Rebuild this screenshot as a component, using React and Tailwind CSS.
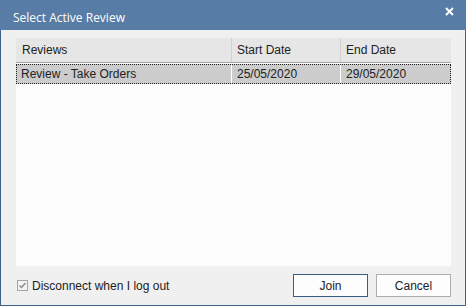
export default function App() {
    const cols = [
        { label: "Reviews", w: "w-[216px]", pl: "pl-[6px]" },
        { label: "Start Date", w: "w-[109px]", pl: "pl-[5px]" },
        { label: "End Date", w: "flex-1", pl: "pl-[5px]" },
    ]
    const row = ["Review - Take Orders", "25/05/2020", "29/05/2020"]

    return (
        <div className="w-[466px] h-[306px] flex flex-col bg-[#f0f0f0] border-x border-b border-[#3f6189] font-['Liberation_Sans',Arial,sans-serif] text-[12px] text-[#222]">
            {/* Title bar */}
            <div className="h-[30px] -mx-px bg-[#577ca5] flex items-center justify-between pl-[13px] pr-[12px] shrink-0">
                <span className="text-white text-[12px] font-['Open_Sans',sans-serif] pt-[5px]">Select Active Review</span>
                <svg width="9" height="9" viewBox="0 0 9 9" className="mb-[8px]">
                    <path d="M1 1 L8 8 M8 1 L1 8" stroke="white" strokeWidth="2" />
                </svg>
            </div>

            {/* Body */}
            <div className="flex-1 flex flex-col pl-[15px] pr-[14px] pt-[8px] pb-[8px]">
                <div className="h-[228px] bg-[#fdfdfd] flex flex-col">
                    {/* Header */}
                    <div className="h-[25px] flex bg-[#e6e6e6] border-b border-[#a5a5a5]">
                        {cols.map((c, i) => (
                            <div key={c.label} className={`${c.w} ${c.pl} flex items-center ${i < 2 ? "border-r border-[#d2d2d2]" : ""}`}>
                                {c.label}
                            </div>
                        ))}
                    </div>
                    {/* Selected row */}
                    <div className="mt-px h-[20px] flex bg-[#cccccc] border border-dotted border-[#222]">
                        {row.map((v, i) => (
                            <div key={i} className={`${i === 0 ? "w-[215px] pl-[4px]" : i === 1 ? "w-[109px] pl-[5px]" : "flex-1 pl-[5px]"} flex items-center ${i < 2 ? "border-r border-white" : ""}`}>
                                {v}
                            </div>
                        ))}
                    </div>
                </div>

                {/* Footer */}
                <div className="mt-[8px] flex items-center justify-between">
                    <label className="flex items-center gap-[4px] ml-px">
                        <span className="w-[11px] h-[11px] border border-[#a3a3a3] bg-[#f4f4f4] flex items-center justify-center">
                            <svg width="9" height="9" viewBox="0 0 9 9">
                                <path d="M1.5 4.5 L3.5 6.5 L7.5 2" stroke="#8a8a8a" strokeWidth="1.4" fill="none" />
                            </svg>
                        </span>
                        <span>Disconnect when I log out</span>
                    </label>
                    <div className="flex gap-[8px]">
                        <button className="w-[75px] h-[23px] bg-[#fdfdfd] border border-[#3c5d82] flex items-center justify-center">Join</button>
                        <button className="w-[75px] h-[23px] bg-[#fdfdfd] border border-[#adadad] flex items-center justify-center">Cancel</button>
                    </div>
                </div>
            </div>
        </div>
    )
}
